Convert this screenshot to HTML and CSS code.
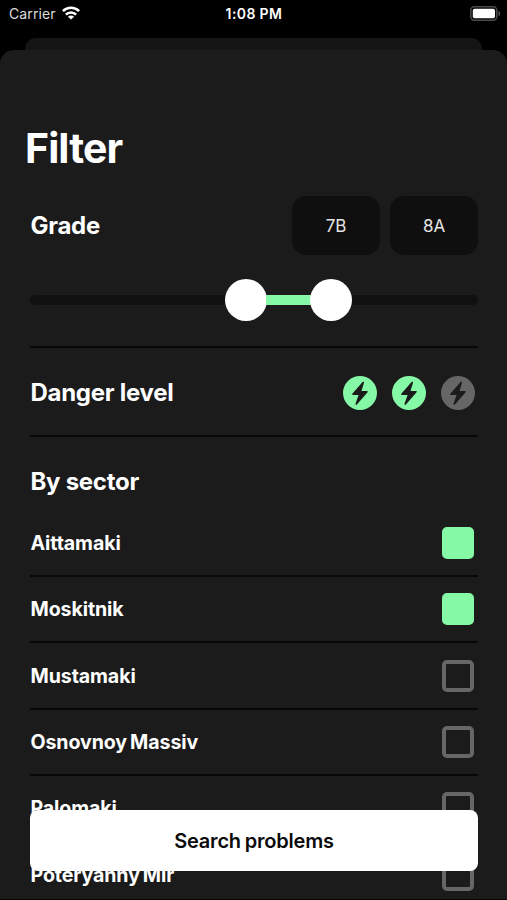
FILE: index.html
```html
<!DOCTYPE html>
<html lang="en">
<head>
<meta charset="utf-8">
<title>Filter</title>
<link rel="stylesheet" href="styles.css">
</head>
<body>
<div class="phone">
  <header class="status">
    <div class="carrier"><span>Carrier</span>
      <svg class="wifi" viewBox="0 0 18 14" width="18" height="14"><g fill="none" stroke="#fff" stroke-width="2.6"><path d="M.9 5.1a11.5 11.5 0 0 1 16.2 0"/><path d="M3.9 8.6a7.2 7.2 0 0 1 10.2 0"/></g><path d="M9 13.6 5.9 10.7a4.4 4.4 0 0 1 6.2 0Z" fill="#fff"/></svg>
    </div>
    <time class="clock">1:08 PM</time>
    <svg class="battery" viewBox="0 0 31 15" width="31" height="15"><rect x=".8" y=".8" width="26" height="13.4" rx="3.6" fill="none" stroke="#4b4b4b" stroke-width="1.5"/><rect x="2.8" y="2.8" width="22.2" height="9.4" rx="1.8" fill="#fff"/><path d="M28.5 5v5c2.2-.8 2.2-4.2 0-5Z" fill="#5a5a5a"/></svg>
  </header>
  <div class="backsheet"></div>
  <main class="sheet">
    <h1 class="title">Filter</h1>
    <section class="grade">
      <h2>Grade</h2>
      <div class="values"><span class="value">7B</span><span class="value">8A</span></div>
    </section>
    <div class="slider"><i class="track left"></i><i class="knob"></i><i class="range"></i><i class="knob"></i><i class="track right"></i></div>
    <section class="danger">
      <h2>Danger level</h2>
      <div class="levels">
        <svg class="bolt on" viewBox="0 0 34 34"><circle cx="17" cy="17" r="17"/><path d="M19.6 6.1 9.5 17.6c-.6.7-.3 1.3.5 1.3h5.6L12.6 27.6c-.4 1.3.5 1.7 1.3.8L24.4 16.4c.6-.8.3-1.3-.5-1.3h-5.4l2.5-8.3c.3-1.1-.6-1.6-1.4-.7Z"/></svg>
        <svg class="bolt on" viewBox="0 0 34 34"><circle cx="17" cy="17" r="17"/><path d="M19.6 6.1 9.5 17.6c-.6.7-.3 1.3.5 1.3h5.6L12.6 27.6c-.4 1.3.5 1.7 1.3.8L24.4 16.4c.6-.8.3-1.3-.5-1.3h-5.4l2.5-8.3c.3-1.1-.6-1.6-1.4-.7Z"/></svg>
        <svg class="bolt" viewBox="0 0 34 34"><circle cx="17" cy="17" r="17"/><path d="M19.6 6.1 9.5 17.6c-.6.7-.3 1.3.5 1.3h5.6L12.6 27.6c-.4 1.3.5 1.7 1.3.8L24.4 16.4c.6-.8.3-1.3-.5-1.3h-5.4l2.5-8.3c.3-1.1-.6-1.6-1.4-.7Z"/></svg>
      </div>
    </section>
    <h2 class="sector-title">By sector</h2>
    <ul class="sectors">
      <li><span>Aittamaki</span><i class="box checked"></i></li>
      <li><span>Moskitnik</span><i class="box checked"></i></li>
      <li><span>Mustamaki</span><i class="box"></i></li>
      <li><span>Osnovnoy Massiv</span><i class="box"></i></li>
      <li><span>Palomaki</span><i class="box"></i></li>
      <li><span>Poteryanny Mir</span><i class="box"></i></li>
    </ul>
  </main>
  <button class="search">Search problems</button>
</div>
</body>
</html>
```

FILE: styles.css
```css
* { box-sizing: border-box; }
body { margin: 0; background: #000; color: #fff; font-family: Inter, "Liberation Sans", sans-serif; }
.phone { position: relative; width: 507px; height: 900px; overflow: hidden; display: flex; flex-direction: column; border-bottom: 1px solid #0b0508; }
.status { flex: none; height: 38px; padding: 6px 6px 0 9px; display: grid; grid-template-columns: 1fr auto 1fr; align-items: start; line-height: 16px; font-size: 14px; }
.carrier { display: flex; gap: 6px; color: #dcdcdc; letter-spacing: .1px; }
.clock { font-weight: 600; letter-spacing: .5px; margin-right: 2px; word-spacing: -.5px; }
.battery { justify-self: end; }
.backsheet { flex: none; height: 12px; margin: 0 25px; background: #151515; border-radius: 11px 11px 0 0; }
.sheet { flex: none; height: 849px; padding: 0 29px 0 30px; background: #1b1b1b; border-radius: 14px 14px 0 0; overflow: hidden; }
h1, h2 { margin: 0; }
h2 { padding-left: .5px; font-size: 24px; font-weight: 650; line-height: 30px; letter-spacing: -.28px; }
.title { margin: 73px 0 0 -5px; font-size: 41px; font-weight: 700; line-height: 50px; letter-spacing: -.9px; }
.grade { margin-top: 23px; height: 59px; display: flex; align-items: center; justify-content: space-between; }
.values { display: flex; gap: 10px; }
.value { width: 88px; height: 59px; border-radius: 14px; background: #0f0f0f; color: #e5e5e5; display: flex; align-items: center; justify-content: center; font-size: 17px; }
.slider { height: 93px; padding-bottom: 1px; display: flex; align-items: center; border-bottom: 2px solid #080808; }
.track, .range { height: 10px; background: #101010; }
.left { width: 195px; border-radius: 5px 0 0 5px; }
.right { flex: 1; border-radius: 0 5px 5px 0; }
.range { width: 44.5px; margin: 0 -1px; background: #85f9a6; }
.knob { width: 42px; height: 42px; border-radius: 50%; background: #fff; }
.danger { height: 89px; padding: 2px 3px 0 0; display: flex; align-items: center; justify-content: space-between; border-bottom: 2px solid #080808; }
.levels { display: flex; gap: 15px; }
.bolt { width: 34px; height: 34px; fill: #666; }
.bolt.on { fill: #85f9a6; }
.bolt path { fill: #1b1b1b; }
.sector-title { margin-top: 30px; }
.sectors { list-style: none; margin: 13.6px 0 0; padding: 0; font-size: 19.6px; font-weight: 650; letter-spacing: -.1px; word-spacing: -1.5px; }
.sectors li { height: 66.4px; padding: 0 4px 0 .5px; display: flex; align-items: center; justify-content: space-between; border-bottom: 2px solid #080808; }
.box { width: 32px; height: 32px; border: 4px solid #666; border-radius: 5px; }
.box.checked { background: #85f9a6; border-color: #85f9a6; }
.search { position: absolute; left: 30px; bottom: 28px; width: 448px; height: 61px; border: 0; border-radius: 8px; background: #fff; color: #0a0a0a; font: 600 20px Inter, sans-serif; letter-spacing: -.2px; word-spacing: -1px; }
```
